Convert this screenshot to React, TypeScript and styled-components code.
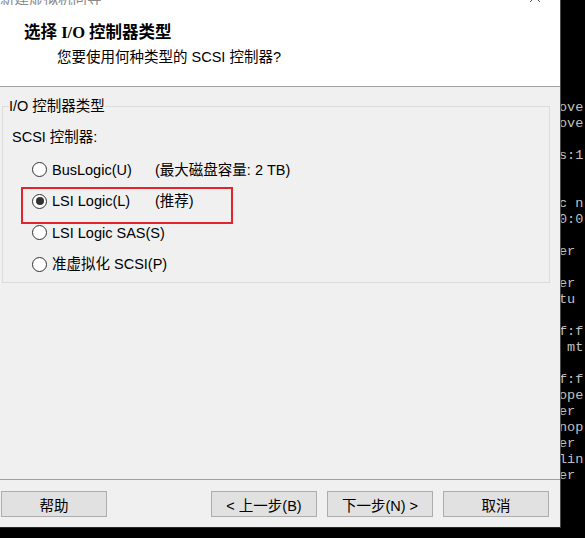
import React from "react";
import styled, { createGlobalStyle } from "styled-components";

const GlobalStyle = createGlobalStyle`
  html, body {
    margin: 0;
    background: #000;
  }
  body {
    font-family: "Liberation Sans", "Noto Sans CJK SC", sans-serif;
  }
`;

const Screen = styled.div`
  display: flex;
  width: 585px;
  height: 538px;
  overflow: hidden;
  background: #000;
`;

const Dialog = styled.div`
  position: relative;
  z-index: 1;
  display: flex;
  flex-direction: column;
  flex: 0 0 560px;
  height: 527px;
  background: #f0f0f0;
  border-right: 1px solid #4a4a4a;
  border-bottom: 1px solid #2a2a2a;
  font-size: 14.5px;
  color: #000;
`;

const TitleBar = styled.div`
  display: flex;
  align-items: flex-end;
  height: 5px;
  overflow: hidden;
  padding-right: 20px;
`;

const WindowTitle = styled.span`
  flex: 1;
  font-size: 14.5px;
  line-height: 12px;
  color: #8a8a8a;
  white-space: nowrap;
`;

const CloseGlyph = styled.svg`
  align-self: flex-start;
  margin-top: -8px;
`;

const Header = styled.div`
  display: flex;
  flex-direction: column;
  height: 86px;
  background: #fff;
  border-bottom: 1px solid #a0a0a0;
`;

const Heading = styled.div`
  margin: 18px 0 0 24px;
  font-family: "Liberation Serif", "Noto Sans CJK SC", serif;
  font-weight: 700;
  font-size: 16.5px;
  line-height: 20px;
`;

const SubHeading = styled.div`
  margin: 4px 0 0 57px;
  font-size: 14.5px;
  line-height: 20px;
`;

const Body = styled.div`
  flex: 1;
  padding: 10px 0 0 2px;
`;

const Group = styled.fieldset`
  box-sizing: border-box;
  width: 548px;
  margin: 0;
  padding: 0 0 2px 6px;
  border: 1px solid #dcdcdc;
`;

const GroupTitle = styled.legend`
  padding: 0;
  line-height: 18px;
`;

const FieldLabel = styled.div`
  margin: 13px 0 0 3px;
  line-height: 18px;
`;

const Rows = styled.div`
  position: relative;
  margin: 8px 0 0 23px;
`;

const Row = styled.div`
  display: flex;
  align-items: center;
  height: 31.5px;
  line-height: 18px;
  white-space: nowrap;
`;

const Choice = styled.label`
  display: flex;
  align-items: center;
  gap: 5px;
  min-width: 123px;
`;

const Radio = styled.span<{ $checked?: boolean }>`
  box-sizing: border-box;
  display: flex;
  align-items: center;
  justify-content: center;
  width: 15px;
  height: 15px;
  border: 1px solid #333;
  border-radius: 50%;
  background: #fff;

  &::after {
    content: "";
    width: 8px;
    height: 8px;
    border-radius: 50%;
    background: ${(p) => (p.$checked ? "#333" : "transparent")};
  }
`;

const Highlight = styled.div`
  position: absolute;
  left: -11px;
  top: 33px;
  box-sizing: border-box;
  width: 212px;
  height: 37px;
  border: 2px solid #e3242b;
  pointer-events: none;
`;

const Footer = styled.div`
  display: flex;
  align-items: center;
  padding: 11px 11px 10px 1px;
  border-top: 1px solid #a0a0a0;
`;

const NavGroup = styled.div`
  display: flex;
  gap: 10px;
  margin-left: auto;
`;

const Button = styled.button`
  box-sizing: border-box;
  width: 106px;
  height: 26px;
  padding: 0;
  border: 1px solid #adadad;
  background: #e1e1e1;
  font-family: inherit;
  font-size: 14.5px;
  color: #000;
`;

const Terminal = styled.div`
  flex: 1;
  margin-left: -2px;
  padding-top: 100px;
  font-family: "Liberation Mono", "DejaVu Sans Mono", monospace;
  font-size: 13.5px;
  line-height: 16px;
  color: #c0c0c0;
  white-space: pre;
`;

const consoleLines = [
  "ove", "ove", "", "s:1", "", "", "c n", "0:0", "", "er", "", "er",
  "tu", "", "f:f", " mt", "", "f:f", "ope", "er", "nop", "er", "lin", "er",
];

const options = [
  { label: "BusLogic(U)", note: "(最大磁盘容量: 2 TB)" },
  { label: "LSI Logic(L)", note: "(推荐)", checked: true },
  { label: "LSI Logic SAS(S)" },
  { label: "准虚拟化 SCSI(P)" },
];

const App = () => (
  <>
    <GlobalStyle />
    <Screen>
      <Dialog>
        <Header>
          <TitleBar>
            <WindowTitle>新建虚拟机向导</WindowTitle>
            <CloseGlyph width="10" height="10" viewBox="0 0 10 10">
              <path d="M0 0L10 10M10 0L0 10" stroke="#555" strokeWidth="1" />
            </CloseGlyph>
          </TitleBar>
          <Heading>选择 I/O 控制器类型</Heading>
          <SubHeading>您要使用何种类型的 SCSI 控制器?</SubHeading>
        </Header>

        <Body>
          <Group>
            <GroupTitle>I/O 控制器类型</GroupTitle>
            <FieldLabel>SCSI 控制器:</FieldLabel>
            <Rows>
              {options.map((o) => (
                <Row key={o.label}>
                  <Choice>
                    <Radio $checked={o.checked} />
                    {o.label}
                  </Choice>
                  {o.note && <span>{o.note}</span>}
                </Row>
              ))}
              <Highlight />
            </Rows>
          </Group>
        </Body>

        <Footer>
          <Button>帮助</Button>
          <NavGroup>
            <Button>&lt; 上一步(B)</Button>
            <Button>下一步(N) &gt;</Button>
            <Button>取消</Button>
          </NavGroup>
        </Footer>
      </Dialog>

      <Terminal>
        {consoleLines.map((l, i) => (
          <div key={i}>{l || " "}</div>
        ))}
      </Terminal>
    </Screen>
  </>
);

export default App;
